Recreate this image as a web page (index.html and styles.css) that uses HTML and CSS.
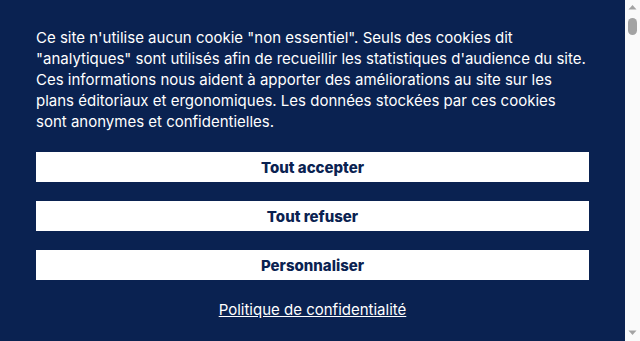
FILE: index.html
```html
<!DOCTYPE html>
<html lang="fr">
<head>
    <meta charset="UTF-8">
    <meta name="viewport" content="width=device-width, initial-scale=1.0">
    <title>Cookies</title>
    <link rel="stylesheet" href="styles.css">
</head>
<body>
    <div class="cookie-banner">
        <p class="cookie-text">Ce site n'utilise aucun cookie "non essentiel". Seuls des cookies dit "analytiques" sont utilisés afin de recueillir les statistiques d'audience du site. Ces informations nous aident à apporter des améliorations au site sur les plans éditoriaux et ergonomiques. Les données stockées par ces cookies sont anonymes et confidentielles.</p>
        <div class="cookie-actions">
            <button class="cookie-btn">Tout accepter</button>
            <button class="cookie-btn">Tout refuser</button>
            <button class="cookie-btn">Personnaliser</button>
        </div>
        <a class="cookie-link" href="#">Politique de confidentialité</a>
    </div>
    <div class="scrollbar">
        <svg class="scroll-arrow" width="15" height="15" viewBox="0 0 15 15"><polygon points="7.5,5 11.5,9.5 3.5,9.5" fill="#a3a3a3"/></svg>
        <div class="scroll-track">
            <div class="scroll-thumb"></div>
        </div>
        <svg class="scroll-arrow" width="15" height="15" viewBox="0 0 15 15"><polygon points="3.5,4.5 11.5,4.5 7.5,9" fill="#a3a3a3"/></svg>
    </div>
</body>
</html>
```

FILE: styles.css
```css
body {
    font-family: Inter, "Noto Sans", sans-serif;
    margin: 0;
    height: 341px;
    display: flex;
    overflow: hidden;
    background: #0a2251;
}
.cookie-banner {
    flex: 1;
    background: #0a2251;
    color: #fff;
    padding: 27px 36px 0;
}
.cookie-text {
    margin: 0;
    font-size: 15px;
    line-height: 21px;
}
.cookie-actions {
    display: flex;
    flex-direction: column;
    gap: 20px;
    margin-top: 20px;
}
.cookie-btn {
    display: block;
    width: 100%;
    height: 30px;
    border: 0;
    border-radius: 0;
    background: #fff;
    color: #0a2251;
    font-family: inherit;
    font-size: 15px;
    font-weight: 800;
    cursor: pointer;
}
.cookie-btn + .cookie-btn {
    margin-top: -1px;
}
.cookie-link {
    display: block;
    margin-top: 20px;
    text-align: center;
    color: #fff;
    font-size: 15px;
}

/* fake page scrollbar */
.scrollbar {
    width: 15px;
    display: flex;
    flex-direction: column;
    background: #fafafa;
}
.scroll-arrow {
    display: block;
    flex: none;
}
.scroll-track {
    flex: 1;
    padding: 3px 3px 0;
}
.scroll-thumb {
    width: 9px;
    height: 17px;
    border-radius: 5px;
    background: #a3a3a3;
}
```
